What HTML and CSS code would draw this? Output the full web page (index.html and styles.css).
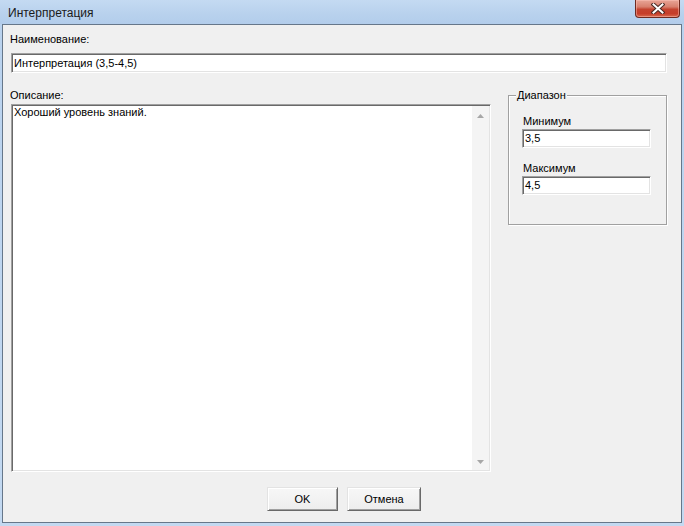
FILE: index.html
```html
<!DOCTYPE html>
<html lang="ru">
<head>
<meta charset="utf-8">
<title>Интерпретация</title>
<link rel="stylesheet" href="styles.css">
</head>
<body>
<div class="window">
  <div class="titlebar">
    <span class="title">Интерпретация</span>
    <div class="close">
      <svg width="14" height="11" viewBox="0 0 14 11">
        <path d="M2.5 1.5 L11.5 9.5 M11.5 1.5 L2.5 9.5" stroke="#4a2a25" stroke-width="4" stroke-linecap="square" fill="none"/>
        <path d="M2.5 1.5 L11.5 9.5 M11.5 1.5 L2.5 9.5" stroke="#ffffff" stroke-width="2" stroke-linecap="square" fill="none"/>
      </svg>
    </div>
  </div>
  <div class="client">
    <div class="lbl name-lbl">Наименование:</div>
    <div class="field name-field">Интерпретация (3,5-4,5)</div>
    <div class="main">
      <div class="desc-col">
        <div class="lbl">Описание:</div>
        <div class="memo">
          <div class="memo-text">Хороший уровень знаний.</div>
          <div class="vscroll">
            <svg width="7" height="4" viewBox="0 0 7 4"><path d="M3.5 0 L7 4 L0 4 Z" fill="#a7a7a7"/></svg>
            <svg width="7" height="4" viewBox="0 0 7 4"><path d="M0 0 L7 0 L3.5 4 Z" fill="#a7a7a7"/></svg>
          </div>
        </div>
      </div>
      <fieldset class="range">
        <legend>Диапазон</legend>
        <div class="lbl range-lbl first">Минимум</div>
        <div class="field small">3,5</div>
        <div class="lbl range-lbl">Максимум</div>
        <div class="field small">4,5</div>
      </fieldset>
    </div>
    <div class="buttons">
      <div class="btn ok">OK</div>
      <div class="btn cancel">Отмена</div>
    </div>
  </div>
</div>
</body>
</html>
```

FILE: styles.css
```css
html, body {
  margin: 0;
  padding: 0;
}
body {
  width: 684px;
  height: 526px;
  overflow: hidden;
  background: linear-gradient(to bottom, #b9d2ee, #c3d9f1);
  font-family: "Liberation Sans", Arial, sans-serif;
  font-size: 11px;
  color: #000;
}
.window {
  display: flex;
  flex-direction: column;
  height: 526px;
}
.titlebar {
  height: 24px;
  display: flex;
  align-items: flex-start;
  background: linear-gradient(to bottom, #c4daf2 0%, #b8d1ed 60%, #b3cdeb 100%);
}
.title {
  margin-left: 8px;
  margin-top: 6px;
  font-size: 12px;
  line-height: 14px;
  color: #1a1a1a;
}
.close {
  margin-left: auto;
  margin-right: 4px;
  width: 45px;
  height: 18px;
  box-sizing: border-box;
  border: 1px solid #6e2a20;
  border-top: none;
  border-radius: 0 0 4px 4px;
  background: linear-gradient(to bottom, #e8a597 0%, #d8806e 40%, #c4432f 55%, #c63e2a 80%, #d86a4e 100%);
  box-shadow: inset 0 0 0 1px rgba(255, 200, 190, 0.45);
  display: flex;
  align-items: center;
  justify-content: center;
}
.client {
  flex: 1;
  margin: 0 2px 3px 2px;
  border: 1px solid #66778a;
  background: #f0f0f0;
  display: flex;
  flex-direction: column;
  align-items: flex-start;
}
.lbl {
  line-height: 13px;
  white-space: nowrap;
}
.name-lbl {
  margin-top: 8px;
  margin-left: 7px;
}
.field {
  box-sizing: border-box;
  background: #fff;
  border: 1px solid;
  border-color: #a0a0a0 #ffffff #ffffff #a0a0a0;
  box-shadow: inset 1px 1px 0 #696969, inset -1px -1px 0 #e3e3e3;
  padding: 2px 2px 0 2px;
  line-height: 13px;
  white-space: nowrap;
}
.name-field {
  margin-top: 7px;
  margin-left: 8px;
  width: 656px;
  height: 20px;
  padding-top: 3px;
}
.main {
  display: flex;
  align-items: flex-start;
  margin-top: 16px;
}
.desc-col {
  margin-left: 7px;
  width: 481px;
  display: flex;
  flex-direction: column;
}
.memo {
  margin-top: 2px;
  margin-left: 1px;
  width: 480px;
  height: 368px;
  box-sizing: border-box;
  background: #fff;
  border: 1px solid;
  border-color: #a0a0a0 #ffffff #ffffff #a0a0a0;
  box-shadow: inset 1px 1px 0 #696969, inset -1px -1px 0 #e3e3e3;
  display: flex;
}
.memo-text {
  flex: 1;
  padding: 1px 0 0 2px;
  line-height: 13px;
}
.vscroll {
  width: 17px;
  margin: 1px 1px 1px 0;
  background: #f4f4f4;
  display: flex;
  flex-direction: column;
  justify-content: space-between;
  align-items: center;
  padding: 8px 0 6px 0;
  box-sizing: border-box;
}
.range {
  margin: 0 0 0 17px;
  width: 159px;
  box-sizing: border-box;
  padding: 0 0 29px 0;
  min-width: 0;
  border: 1px solid #a0a0a0;
  box-shadow: 1px 1px 0 #ffffff, inset 1px 1px 0 #ffffff;
}
.range legend {
  margin-left: 7px;
  padding: 0 1px;
  line-height: 13px;
  background: #f0f0f0;
}
.range-lbl {
  margin-left: 14px;
  margin-top: 14px;
}
.range-lbl.first {
  margin-top: 13px;
}
.small {
  margin-left: 13px;
  margin-top: 1px;
  width: 129px;
  height: 19px;
  padding-top: 2px;
}
.buttons {
  display: flex;
  gap: 9px;
  margin-top: 15px;
  padding-left: 264px;
}
.btn {
  box-sizing: border-box;
  height: 24px;
  border: 1px solid;
  border-color: #e3e3e3 #696969 #696969 #e3e3e3;
  box-shadow: inset 1px 1px 0 #ffffff, inset -1px -1px 0 #a0a0a0;
  background: linear-gradient(to bottom, #f7f7f7, #ededed);
  display: flex;
  align-items: center;
  justify-content: center;
  line-height: 13px;
}
.ok {
  width: 71px;
}
.cancel {
  width: 74px;
}
```
